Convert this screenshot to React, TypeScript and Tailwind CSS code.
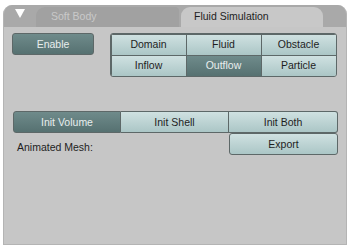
import React from "react";

type BtnProps = {
  label: string;
  active?: boolean;
  className?: string;
};

function Btn({ label, active, className = "" }: BtnProps) {
  const look = active
    ? "bg-gradient-to-b from-[#6f8b8b] to-[#567171] text-[#e8eeee]"
    : "bg-gradient-to-b from-[#cfe1e1] to-[#abc6c6] text-[#1e1e1e]";
  return (
    <div
      className={`flex items-center justify-center border border-[#5d6868] text-[10.5px] leading-none ${look} ${className}`}
    >
      {label}
    </div>
  );
}

export default function App() {
  return (
    <div
      className="h-[249px] w-[350px] overflow-hidden bg-white pt-[5px] pl-[3px]"
      style={{ fontFamily: '"Liberation Sans", Arial, sans-serif' }}
    >
      <div className="flex h-[240px] w-[344px] flex-col overflow-hidden rounded-t-[9px] border-x border-b border-[#b4b4b4] bg-[#c6c6c6]">
        <div className="flex h-[22px] items-end bg-[#a9a9a9]">
          <div className="flex h-full w-[32px] items-start justify-center pt-[4px]">
            <svg width="10" height="9" viewBox="0 0 10 9">
              <path d="M0 0 H10 L5 9 Z" fill="#ffffff" />
            </svg>
          </div>
          <div className="flex h-[20px] w-[143px] items-center rounded-tl-[9px] rounded-tr-[4px] bg-[#a1a1a1] pl-[15px] text-[10.5px] text-[#c9c9c9]">
            Soft Body
          </div>
          <div className="ml-[2px] flex h-[20px] w-[142px] items-center rounded-t-[9px] bg-[#c8c8c8] pl-[13px] text-[10.5px] text-[#1e1e1e]">
            Fluid Simulation
          </div>
        </div>

        <div className="flex flex-col px-[8px] pt-[6px]">
          <div className="flex items-start">
            <Btn label="Enable" active className="h-[22px] w-[82px] rounded-[3px]" />
            <div className="ml-[16px] grid grid-cols-3 overflow-hidden rounded-[3px] border border-[#5d6868]">
              <Btn label="Domain" className="-m-[0.5px] h-[22px] w-[76px]" />
              <Btn label="Fluid" className="-m-[0.5px] h-[22px] w-[76px]" />
              <Btn label="Obstacle" className="-m-[0.5px] h-[22px] w-[76px]" />
              <Btn label="Inflow" className="-m-[0.5px] h-[22px] w-[76px]" />
              <Btn label="Outflow" active className="-m-[0.5px] h-[22px] w-[76px]" />
              <Btn label="Particle" className="-m-[0.5px] h-[22px] w-[76px]" />
            </div>
          </div>

          <div className="mt-[34px] flex pl-[1px]">
            <Btn label="Init Volume" active className="h-[22px] w-[108px] rounded-l-[3px]" />
            <Btn label="Init Shell" className="h-[22px] w-[108px] border-l-0" />
            <Btn label="Init Both" className="h-[22px] w-[109px] rounded-r-[3px] border-l-0" />
          </div>

          <div className="flex items-center pl-[1px]">
            <div className="w-[216px] pl-[4px] pt-[7px] text-[10.5px] text-[#1e1e1e]">
              Animated Mesh:
            </div>
            <Btn label="Export" className="h-[22px] w-[109px] rounded-[3px]" />
          </div>
        </div>
      </div>
    </div>
  );
}
